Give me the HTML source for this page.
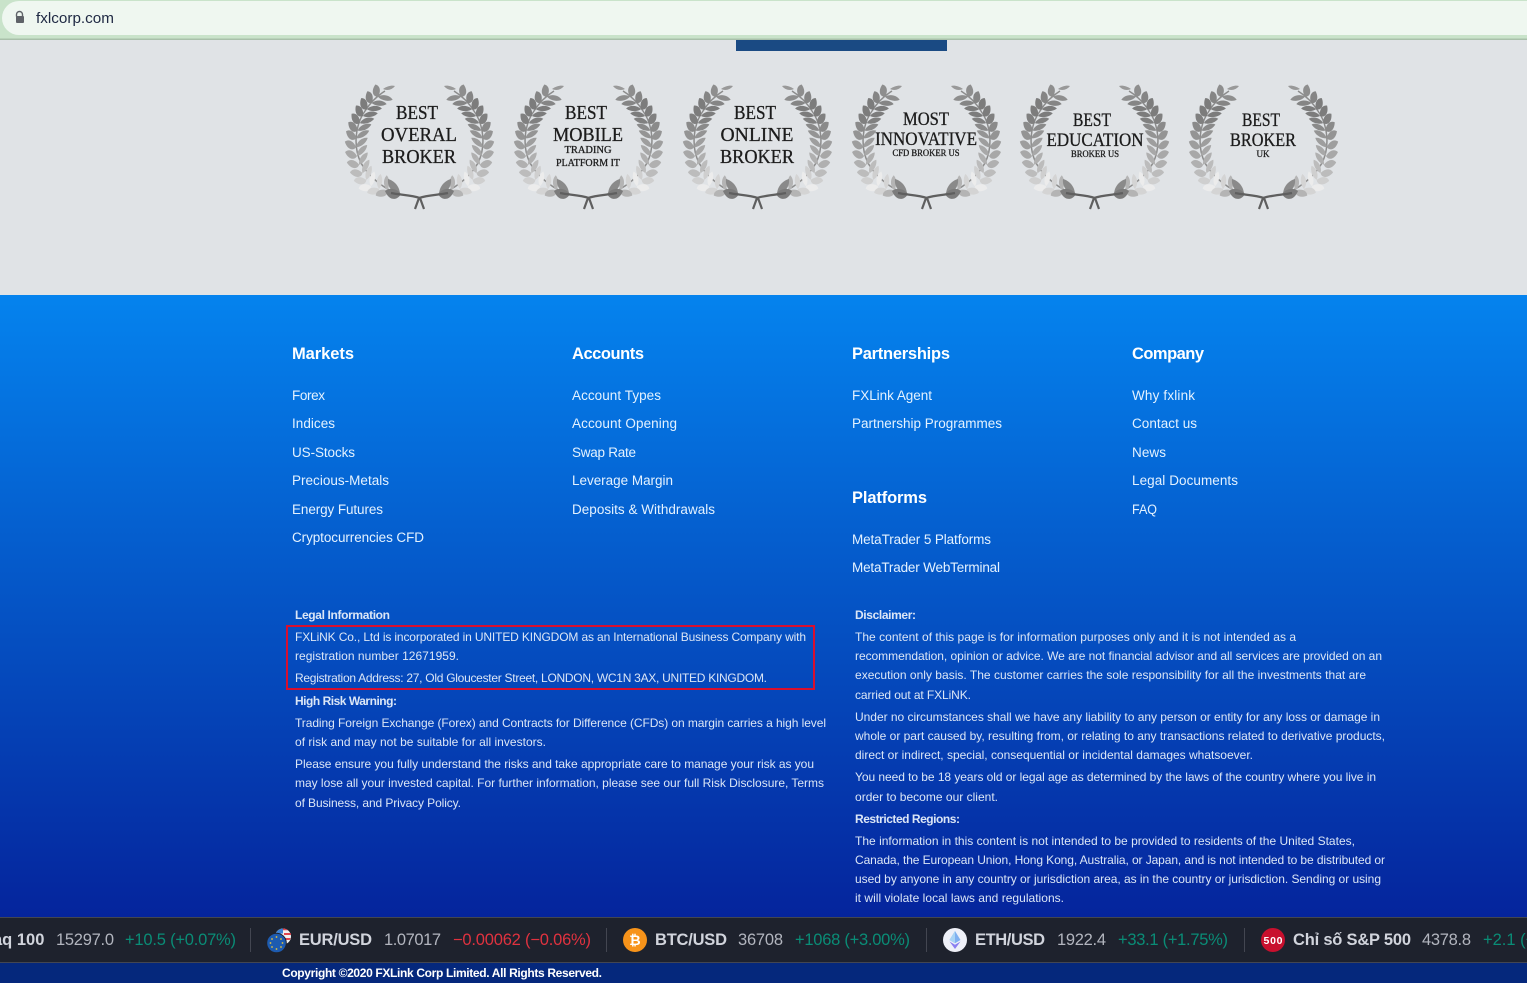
<!DOCTYPE html>
<html lang="en"><head><meta charset="utf-8"><title>fxlcorp.com</title>
<style>
html,body{margin:0;padding:0;width:1527px;height:983px;overflow:hidden;background:#e0e3e6}
svg{position:absolute;left:0;top:0;display:block}
text{font-family:"Liberation Sans","DejaVu Sans",sans-serif}
.h{font-weight:700;font-size:16.5px;fill:#fff}
.l{font-size:13.5px;fill:#e4f2ff}
.b{font-size:12px;fill:#dbe6f6}
.bb{font-size:12px;fill:#dbe6f6;font-weight:700}
.s{font-family:"Liberation Serif",serif;fill:#1c1c1c;text-anchor:middle;stroke:#1c1c1c;stroke-width:.3}
.a{font-size:20px}.c{font-size:10px}
.n{font-size:16.5px;font-weight:700;fill:#d1d4dc}
.p{font-size:16.5px;fill:#b2b5be}
.g{font-size:16.5px;fill:#0a8c76}
.r{font-size:16.5px;fill:#e0323f}
</style></head><body>
<svg width="1527" height="983" viewBox="0 0 1527 983">
<defs>
<linearGradient id="bg" x1="0" y1="0" x2="0" y2="1"><stop offset="0" stop-color="#0583ee"/><stop offset="1" stop-color="#05249c"/></linearGradient>
<filter id="soft" x="-5%" y="-5%" width="110%" height="110%"><feGaussianBlur stdDeviation=".3"/></filter>
<g id="p"><path d="M139 60C142 56 148 58 150 66C146 69 141 66 139 60Z"/><path d="M139 60C135 60 129 63 127 69C132 70 138 66 139 60Z"/></g>
<g id="hw">
<path d="M50 108C38 102 24 92 16 78C8 62 10 40 20 26C25 18 32 11 40 6" fill="none" stroke="#8c8c8c" stroke-width="1.500"/>
<use href="#p" transform="rotate(229 75 60)" fill="#8e8e8e"/>
<use href="#p" transform="rotate(221 75 60)" fill="#858585"/>
<use href="#p" transform="rotate(214 75 60)" fill="#7c7c7c"/>
<use href="#p" transform="rotate(207 75 60)" fill="#7c7c7c"/>
<use href="#p" transform="rotate(200 75 60)" fill="#808080"/>
<use href="#p" transform="rotate(193 75 60)" fill="#8a8a8a"/>
<use href="#p" transform="rotate(186 75 60)" fill="#949494"/>
<use href="#p" transform="rotate(178 75 60)" fill="#9e9e9e"/>
<use href="#p" transform="rotate(170 75 60)" fill="#a8a8a8"/>
<use href="#p" transform="rotate(162 75 60)" fill="#b0b0b0"/>
<use href="#p" transform="rotate(154 75 60)" fill="#bcbcbc"/>
<use href="#p" transform="rotate(147 75 60)" fill="#cfcfcf"/>
<use href="#p" transform="rotate(140 75 60)" fill="#ececec"/>
<use href="#p" transform="rotate(133 75 60) translate(-4 0)" fill="#d4d4d4"/>
<use href="#p" transform="rotate(126 75 60) translate(-8 0)" fill="#b4b4b4"/>
<path d="M38 4C42 1 47 0 50 1C47 5 42 6 38 4Z" fill="#999"/>
<path d="M43 94C50 96 55 102 55 110C48 109 42 102 43 94Z" fill="#8a8a8a"/>
<path d="M40 106C46 102 52 104 56 109C52 116 44 116 40 106Z" fill="#7c7c7c"/>
<path d="M46 108C56 110 66 110 75 113L79 124" fill="none" stroke="#5f5f5f" stroke-width="2.2"/>
</g>
<g id="w" filter="url(#soft)"><use href="#hw"/><use href="#hw" transform="translate(149 0) scale(-1 1)"/></g>
</defs>

<rect width="1527" height="983" fill="#e0e3e6"/>
<rect x="736" y="40" width="211" height="11" fill="#1a4a83"/>

<!-- browser bar -->
<rect width="1527" height="39" fill="#c9e3ca"/>
<rect y="38.5" width="1527" height="1.5" fill="#a9c0aa"/>
<rect x="2" y="1" width="1560" height="34" rx="17" fill="#eff7f0"/>
<path d="M17 16.500V14.500a3 3 0 0 1 6 0V16.500" fill="none" stroke="#5f6368" stroke-width="1.400" transform="translate(-.5 0)"/>
<rect x="16" y="16" width="8" height="7" rx="1" fill="#5f6368"/>
<text x="36" y="23" font-size="15" fill="#202a44" textLength="78" lengthAdjust="spacingAndGlyphs">fxlcorp.com</text>

<!-- awards -->
<use href="#w" x="345" y="85"/><use href="#w" x="514" y="85"/><use href="#w" x="683" y="85"/>
<use href="#w" x="852" y="85"/><use href="#w" x="1020" y="85"/><use href="#w" x="1189" y="85"/>

<text class="s a" x="417" y="119" textLength="42" lengthAdjust="spacingAndGlyphs">BEST</text>
<text class="s a" x="419" y="141" textLength="76" lengthAdjust="spacingAndGlyphs">OVERAL</text>
<text class="s a" x="419" y="163" textLength="74" lengthAdjust="spacingAndGlyphs">BROKER</text>

<text class="s a" x="586" y="119" textLength="42" lengthAdjust="spacingAndGlyphs">BEST</text>
<text class="s a" x="588" y="141" textLength="70" lengthAdjust="spacingAndGlyphs">MOBILE</text>
<text class="s c" x="588" y="153" textLength="47" lengthAdjust="spacingAndGlyphs">TRADING</text>
<text class="s c" x="588" y="166" textLength="64" lengthAdjust="spacingAndGlyphs">PLATFORM IT</text>

<text class="s a" x="755" y="119" textLength="42" lengthAdjust="spacingAndGlyphs">BEST</text>
<text class="s a" x="757" y="141" textLength="73" lengthAdjust="spacingAndGlyphs">ONLINE</text>
<text class="s a" x="757" y="163" textLength="74" lengthAdjust="spacingAndGlyphs">BROKER</text>

<text class="s" font-size="18.500" x="926" y="125" textLength="46" lengthAdjust="spacingAndGlyphs">MOST</text>
<text class="s" font-size="18.500" x="926" y="145" textLength="102" lengthAdjust="spacingAndGlyphs">INNOVATIVE</text>
<text class="s" font-size="9" x="926" y="156" textLength="67" lengthAdjust="spacingAndGlyphs">CFD BROKER US</text>

<text class="s" font-size="18.500" x="1092" y="126" textLength="38" lengthAdjust="spacingAndGlyphs">BEST</text>
<text class="s" font-size="18.500" x="1095" y="146" textLength="97" lengthAdjust="spacingAndGlyphs">EDUCATION</text>
<text class="s" font-size="9" x="1095" y="157" textLength="48" lengthAdjust="spacingAndGlyphs">BROKER US</text>

<text class="s" font-size="18.500" x="1261" y="126" textLength="38" lengthAdjust="spacingAndGlyphs">BEST</text>
<text class="s" font-size="18.500" x="1263" y="146" textLength="66" lengthAdjust="spacingAndGlyphs">BROKER</text>
<text class="s" font-size="9" x="1263" y="157" textLength="13" lengthAdjust="spacingAndGlyphs">UK</text>

<!-- footer -->
<rect y="295" width="1527" height="623" fill="url(#bg)"/>

<text class="h" x="292" y="359" textLength="62">Markets</text>
<text class="l" x="292" y="400" textLength="33">Forex</text>
<text class="l" x="292" y="428" textLength="43">Indices</text>
<text class="l" x="292" y="457" textLength="63">US-Stocks</text>
<text class="l" x="292" y="485" textLength="97">Precious-Metals</text>
<text class="l" x="292" y="514" textLength="91">Energy Futures</text>
<text class="l" x="292" y="542" textLength="132">Cryptocurrencies CFD</text>

<text class="h" x="572" y="359" textLength="72">Accounts</text>
<text class="l" x="572" y="400" textLength="89">Account Types</text>
<text class="l" x="572" y="428" textLength="105">Account Opening</text>
<text class="l" x="572" y="457" textLength="64">Swap Rate</text>
<text class="l" x="572" y="485" textLength="101">Leverage Margin</text>
<text class="l" x="572" y="514" textLength="143">Deposits &amp; Withdrawals</text>

<text class="h" x="852" y="359" textLength="98">Partnerships</text>
<text class="l" x="852" y="400" textLength="80">FXLink Agent</text>
<text class="l" x="852" y="428" textLength="150">Partnership Programmes</text>
<text class="h" x="852" y="503" textLength="75">Platforms</text>
<text class="l" x="852" y="544" textLength="139">MetaTrader 5 Platforms</text>
<text class="l" x="852" y="572" textLength="148">MetaTrader WebTerminal</text>

<text class="h" x="1132" y="359" textLength="72">Company</text>
<text class="l" x="1132" y="400" textLength="63">Why fxlink</text>
<text class="l" x="1132" y="428" textLength="65">Contact us</text>
<text class="l" x="1132" y="457" textLength="34">News</text>
<text class="l" x="1132" y="485" textLength="106">Legal Documents</text>
<text class="l" x="1132" y="514" textLength="25" lengthAdjust="spacingAndGlyphs">FAQ</text>

<text class="bb" x="295" y="619" textLength="95">Legal Information</text>
<text class="b" x="295" y="641" textLength="511">FXLiNK Co., Ltd is incorporated in UNITED KINGDOM as an International Business Company with</text>
<text class="b" x="295" y="660" textLength="164">registration number 12671959.</text>
<text class="b" x="295" y="682" textLength="472">Registration Address: 27, Old Gloucester Street, LONDON, WC1N 3AX, UNITED KINGDOM.</text>
<rect x="287" y="626" width="527" height="63" fill="none" stroke="#d80f2e" stroke-width="2"/>
<text class="bb" x="295" y="705" textLength="102">High Risk Warning:</text>
<text class="b" x="295" y="727" textLength="531">Trading Foreign Exchange (Forex) and Contracts for Difference (CFDs) on margin carries a high level</text>
<text class="b" x="295" y="746" textLength="251">of risk and may not be suitable for all investors.</text>
<text class="b" x="295" y="768" textLength="519">Please ensure you fully understand the risks and take appropriate care to manage your risk as you</text>
<text class="b" x="295" y="787" textLength="529">may lose all your invested capital. For further information, please see our full Risk Disclosure, Terms</text>
<text class="b" x="295" y="807" textLength="166">of Business, and Privacy Policy.</text>

<text class="bb" x="855" y="619" textLength="61">Disclaimer:</text>
<text class="b" x="855" y="641" textLength="441">The content of this page is for information purposes only and it is not intended as a</text>
<text class="b" x="855" y="660" textLength="527">recommendation, opinion or advice. We are not financial advisor and all services are provided on an</text>
<text class="b" x="855" y="679" textLength="511">execution only basis. The customer carries the sole responsibility for all the investments that are</text>
<text class="b" x="855" y="699" textLength="116">carried out at FXLiNK.</text>
<text class="b" x="855" y="721" textLength="525">Under no circumstances shall we have any liability to any person or entity for any loss or damage in</text>
<text class="b" x="855" y="740" textLength="530">whole or part caused by, resulting from, or relating to any transactions related to derivative products,</text>
<text class="b" x="855" y="759" textLength="398">direct or indirect, special, consequential or incidental damages whatsoever.</text>
<text class="b" x="855" y="781" textLength="521">You need to be 18 years old or legal age as determined by the laws of the country where you live in</text>
<text class="b" x="855" y="801" textLength="143">order to become our client.</text>
<text class="bb" x="855" y="823" textLength="105">Restricted Regions:</text>
<text class="b" x="855" y="845" textLength="500">The information in this content is not intended to be provided to residents of the United States,</text>
<text class="b" x="855" y="864" textLength="530">Canada, the European Union, Hong Kong, Australia, or Japan, and is not intended to be distributed or</text>
<text class="b" x="855" y="883" textLength="526">used by anyone in any country or jurisdiction area, as in the country or jurisdiction. Sending or using</text>
<text class="b" x="855" y="902" textLength="209">it will violate local laws and regulations.</text>

<!-- ticker -->
<rect y="917" width="1527" height="46" fill="#1e222d"/>
<rect y="917" width="1527" height="1" fill="#434651"/>
<rect y="962" width="1527" height="1" fill="#434651"/>
<rect y="963" width="1527" height="20" fill="#05287c"/>

<text class="n" x="-7" y="945">aq 100</text>
<text class="p" x="56" y="945" textLength="58">15297.0</text>
<text class="g" x="125" y="945" textLength="111">+10.5 (+0.07%)</text>
<rect x="250" y="928" width="1" height="24" fill="#434651"/>

<circle cx="283" cy="936.500" r="8" fill="#f0f0f0"/>
<path d="M275.500 934a8 8 0 0 1 7.500-5.500v5z" fill="#3b82d6"/>
<path d="M283 928.500a8 8 0 0 1 5 1.800h-5zM284 933h6.700l.3 2h-7zM284 938h6.700l-1 2h-5.700z" fill="#e0454e"/>
<circle cx="276.500" cy="943" r="9.800" fill="#1d5bb0" stroke="#1e222d" stroke-width="1"/>
<g fill="#e7c43a"><circle cx="276.500" cy="937" r=".9"/><circle cx="281" cy="939" r=".9"/><circle cx="282.500" cy="943" r=".9"/><circle cx="281" cy="947" r=".9"/><circle cx="276.500" cy="949" r=".9"/><circle cx="272" cy="947" r=".9"/><circle cx="270.500" cy="943" r=".9"/><circle cx="272" cy="939" r=".9"/></g>
<text class="n" x="299" y="945" textLength="73">EUR/USD</text>
<text class="p" x="384" y="945" textLength="57">1.07017</text>
<text class="r" x="453" y="945" textLength="138">−0.00062 (−0.06%)</text>
<rect x="606" y="928" width="1" height="24" fill="#434651"/>

<circle cx="635" cy="940" r="12" fill="#f7931a"/>
<text x="635" y="945" font-size="14" font-weight="700" fill="#fff" text-anchor="middle">₿</text>
<text class="n" x="655" y="945" textLength="72">BTC/USD</text>
<text class="p" x="738" y="945" textLength="45">36708</text>
<text class="g" x="795" y="945" textLength="115">+1068 (+3.00%)</text>
<rect x="926" y="928" width="1" height="24" fill="#434651"/>

<circle cx="955" cy="940" r="12" fill="#eef0f8"/>
<path d="M955 931l5.500 9-5.500 3.300-5.500-3.300z" fill="#7fb0f0"/>
<path d="M955 931v12.300l-5.500-3.300z" fill="#a9d4f5"/>
<path d="M949.500 941.500l5.500 3.300 5.500-3.300-5.500 7.500z" fill="#8a7ff0"/>
<text class="n" x="975" y="945" textLength="70">ETH/USD</text>
<text class="p" x="1057" y="945" textLength="49">1922.4</text>
<text class="g" x="1118" y="945" textLength="110">+33.1 (+1.75%)</text>
<rect x="1244" y="928" width="1" height="24" fill="#434651"/>

<circle cx="1273" cy="940" r="12" fill="#c8102e"/>
<text x="1273" y="944" font-size="10.500" font-weight="700" fill="#fff" text-anchor="middle" textLength="19">500</text>
<text class="n" x="1293" y="945" textLength="118">Chỉ số S&amp;P 500</text>
<text class="p" x="1422" y="945" textLength="49">4378.8</text>
<text class="g" x="1483" y="945">+2.1 (+0.05%)</text>

<text x="282" y="977" font-size="12" font-weight="700" fill="#fff" textLength="320">Copyright ©2020 FXLink Corp Limited. All Rights Reserved.</text>
</svg>
</body></html>
